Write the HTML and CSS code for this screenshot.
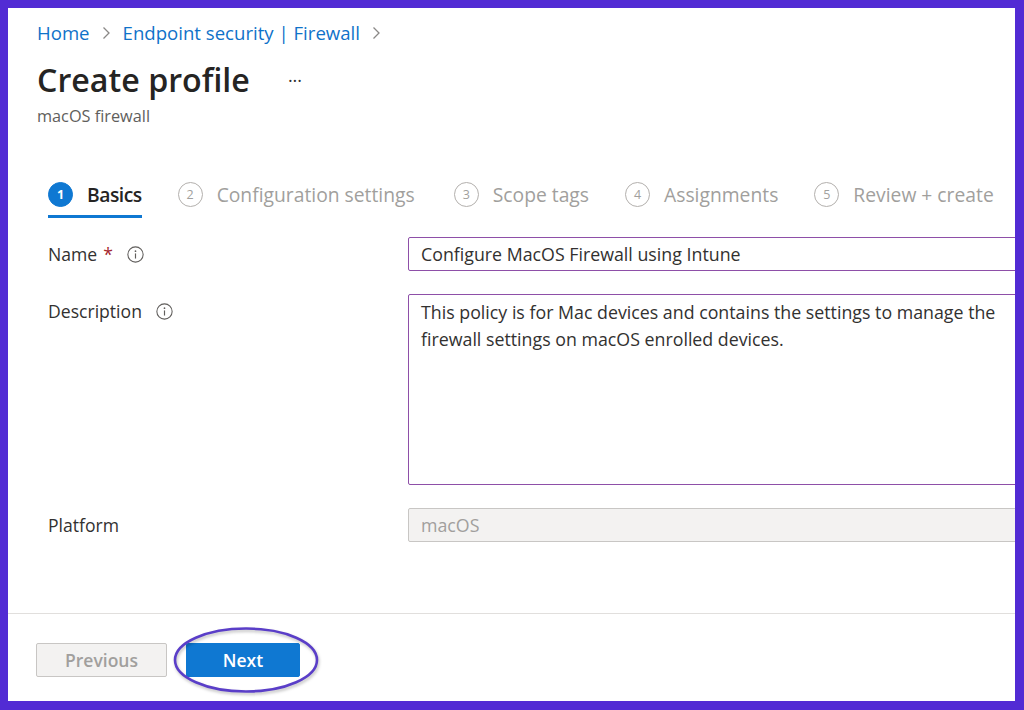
FILE: index.html
```html
<!DOCTYPE html>
<html lang="en">
<head>
<meta charset="utf-8">
<title>Create profile</title>
<link rel="stylesheet" href="styles.css">
</head>
<body>
<div class="frame">
  <header class="head">
    <nav class="crumbs">
      <a class="crumb">Home</a>
      <svg class="chev" viewBox="0 0 10 16" width="10" height="16"><path d="M2.5 2.5 L8 8 L2.5 13.5" fill="none" stroke="#8a8886" stroke-width="1.3"/></svg>
      <a class="crumb">Endpoint security | Firewall</a>
      <svg class="chev" viewBox="0 0 10 16" width="10" height="16"><path d="M2.5 2.5 L8 8 L2.5 13.5" fill="none" stroke="#8a8886" stroke-width="1.3"/></svg>
    </nav>
    <div class="title-row">
      <h1 class="title">Create profile</h1>
      <span class="more">···</span>
    </div>
    <div class="sub">macOS firewall</div>
  </header>

  <div class="tabs">
    <div class="tab active"><span class="num">1</span><span class="tlabel">Basics</span></div>
    <div class="tab"><span class="num">2</span><span class="tlabel">Configuration settings</span></div>
    <div class="tab tab-wide"><span class="num">3</span><span class="tlabel">Scope tags</span></div>
    <div class="tab"><span class="num">4</span><span class="tlabel">Assignments</span></div>
    <div class="tab"><span class="num">5</span><span class="tlabel">Review + create</span></div>
  </div>

  <div class="form">
    <div class="label">Name <span class="req">*</span>
      <svg class="info" viewBox="0 0 16 16" width="17" height="17"><circle cx="8" cy="8" r="7.2" fill="none" stroke="#605e5c" stroke-width="1"/><circle cx="8" cy="4.9" r="0.8" fill="#605e5c"/><path d="M8 7 V11.8" stroke="#605e5c" stroke-width="1.1"/></svg>
    </div>
    <div class="field input">Configure MacOS Firewall using Intune</div>

    <div class="label">Description
      <svg class="info" viewBox="0 0 16 16" width="17" height="17"><circle cx="8" cy="8" r="7.2" fill="none" stroke="#605e5c" stroke-width="1"/><circle cx="8" cy="4.9" r="0.8" fill="#605e5c"/><path d="M8 7 V11.8" stroke="#605e5c" stroke-width="1.1"/></svg>
    </div>
    <div class="field textarea">This policy is for Mac devices and contains the settings to manage the firewall settings on macOS enrolled devices.</div>

    <div class="label">Platform</div>
    <div class="field input disabled">macOS</div>
  </div>

  <footer class="footer">
    <button class="btn prev">Previous</button>
    <button class="btn next">Next</button>
  </footer>

  <svg class="ring" viewBox="0 0 150 70" width="150" height="70">
    <ellipse cx="75" cy="35" rx="71" ry="31.5" fill="none" stroke="#5a3ec8" stroke-width="2.6"/>
  </svg>
</div>
</body>
</html>
```
FILE: styles.css
```css
* { box-sizing: border-box; }
html, body { margin: 0; padding: 0; }
body {
  background: #522bd4;
  width: 1024px;
  height: 710px;
  overflow: hidden;
  font-family: "Open Sans", "Noto Sans", sans-serif;
  color: #323130;
}
.frame {
  position: relative;
  margin: 8px 9px 9px 8px;
  width: 1007px;
  height: 693px;
  background: #fff;
  overflow: hidden;
  display: flex;
  flex-direction: column;
}
.head { padding: 12px 0 0 29px; }
.crumbs {
  display: flex;
  align-items: center;
  height: 26px;
  font-size: 18.6px;
  line-height: 26px;
}
.crumb { color: #0f72c9; }
.chev { margin: 0 12px 0 11px; }
.title-row {
  display: flex;
  align-items: center;
  margin-top: 12px;
  height: 44px;
}
.title {
  margin: 0;
  font-size: 32.2px;
  font-weight: 600;
  color: #252423;
  line-height: 44px;
}
.more {
  margin-left: 38px;
  font-size: 18px;
  color: #323130;
}
.sub {
  margin-top: 2px;
  font-size: 16.3px;
  line-height: 24px;
  color: #605e5c;
}
.tabs {
  display: flex;
  margin-top: 52px;
  padding-left: 40px;
  gap: 36px;
}
.tab {
  display: flex;
  align-items: center;
  height: 38px;
  padding-bottom: 6px;
  border-bottom: 3px solid transparent;
  color: #a19f9d;
  font-size: 19.3px;
}
.tab.active {
  border-bottom-color: #0f78d2;
  color: #252423;
  font-weight: 600;
}
.tab.active .tlabel { letter-spacing: -0.5px; }
.tab-wide { margin-left: 3px; }
.num {
  width: 25px;
  height: 25px;
  border-radius: 50%;
  border: 1.2px solid #b3b0ad;
  display: flex;
  align-items: center;
  justify-content: center;
  font-size: 12.5px;
  font-weight: 400;
  margin-right: 14px;
  color: #a19f9d;
}
.tab.active .num {
  background: #0f78d2;
  border-color: #0f78d2;
  color: #fff;
  font-weight: 700;
}
.form {
  margin-top: 19px;
  padding-left: 40px;
  display: grid;
  grid-template-columns: 360px 650px;
  row-gap: 23px;
}
.label {
  display: flex;
  align-items: center;
  height: 34px;
  font-size: 17.6px;
  color: #323130;
}
.req { color: #a4262c; margin-left: 6px; }
.info { margin-left: 14px; }
.field {
  border: 1px solid #8e4fa8;
  border-radius: 2px;
  font-size: 17.8px;
  color: #323130;
  padding: 0 12px;
}
.input {
  height: 34px;
  line-height: 32px;
}
.textarea {
  height: 191px;
  padding-top: 4px;
  line-height: 27px;
  padding-right: 20px;
}
.disabled {
  background: #f3f2f1;
  border-color: #c8c6c4;
  color: #a19f9d;
}
.footer {
  margin-top: auto;
  height: 88px;
  border-top: 1px solid #e1dfdd;
  padding: 29px 0 0 28px;
  display: flex;
  align-items: flex-start;
  gap: 19px;
}
.btn {
  height: 34px;
  border-radius: 2px;
  font-family: "Open Sans", "Noto Sans", sans-serif;
  font-size: 17.5px;
  font-weight: 600;
  padding: 0;
}
.prev {
  width: 131px;
  background: #f3f2f1;
  border: 1px solid #c8c6c4;
  color: #a19f9d;
}
.next {
  width: 114px;
  background: #0f78d2;
  border: 1px solid #0f78d2;
  color: #fff;
}
.ring {
  position: absolute;
  left: 163px;
  top: 617px;
  filter: drop-shadow(1px 2px 1.5px rgba(0,0,0,0.25));
}
```
